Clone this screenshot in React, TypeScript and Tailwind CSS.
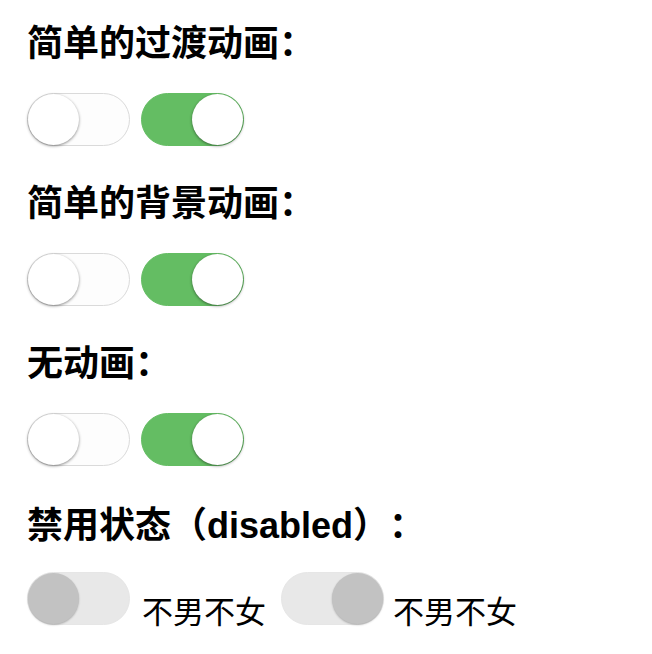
import { useState } from 'react'

type Mode = 'transition' | 'background' | 'none'

/** iOS-style switch, three animation flavours plus a disabled look. */
function Switch({
  defaultChecked = false,
  disabled = false,
  mode = 'none',
  className = '',
}: {
  defaultChecked?: boolean
  disabled?: boolean
  mode?: Mode
  className?: string
}) {
  const [checked, setChecked] = useState(defaultChecked)

  const track = disabled
    ? 'border-[#e6e6e6] bg-[#e8e8e8]'
    : checked
      ? 'border-[#64bd63] bg-[#64bd63]'
      : 'border-[#dadada] bg-[#fdfdfd]'

  const anim =
    mode === 'transition'
      ? 'transition-all duration-300'
      : mode === 'background'
        ? 'transition-colors duration-300'
        : ''

  return (
    <button
      type="button"
      role="switch"
      aria-checked={checked}
      disabled={disabled}
      onClick={() => setChecked((c) => !c)}
      className={`relative h-[53px] w-[103px] shrink-0 rounded-full border ${track} ${anim} ${className}`}
    >
      <span
        className={`absolute top-0 left-0 size-[51px] rounded-full ${
          disabled
            ? 'bg-[#c2c2c2] shadow-[0_1px_2px_rgba(0,0,0,0.25)]'
            : 'bg-white shadow-[0_1px_3px_rgba(0,0,0,0.45)]'
        } ${checked ? 'translate-x-[50px]' : ''} ${mode === 'transition' ? 'transition-transform duration-300' : ''}`}
      />
    </button>
  )
}

function Heading({ children }: { children: React.ReactNode }) {
  return (
    <h3 className="text-[36px] leading-[44px] font-bold [text-spacing-trim:space-all]">{children}</h3>
  )
}

export default function App() {
  return (
    <div
      className="min-h-screen bg-white px-[27px] pt-[22px] text-black"
      style={{ fontFamily: '"Liberation Sans", "Noto Sans CJK SC", sans-serif' }}
    >
      <section>
        <Heading>简单的过渡动画：</Heading>
        <div className="mt-[27px] flex gap-[11px]">
          <Switch mode="transition" />
          <Switch mode="transition" defaultChecked />
        </div>
      </section>

      <section className="mt-[36px]">
        <Heading>简单的背景动画：</Heading>
        <div className="mt-[27px] flex gap-[11px]">
          <Switch mode="background" />
          <Switch mode="background" defaultChecked />
        </div>
      </section>

      <section className="mt-[36px]">
        <Heading>无动画：</Heading>
        <div className="mt-[27px] flex gap-[11px]">
          <Switch />
          <Switch defaultChecked />
        </div>
      </section>

      <section className="mt-[38px]">
        <Heading>禁用状态（disabled）：</Heading>
        <div className="mt-[24px] flex items-end">
          <Switch disabled />
          <span className="ml-[12px] text-[31px] leading-[25px]">不男不女</span>
          <Switch disabled defaultChecked className="ml-[15px]" />
          <span className="ml-[9px] text-[31px] leading-[25px]">不男不女</span>
        </div>
      </section>
    </div>
  )
}
